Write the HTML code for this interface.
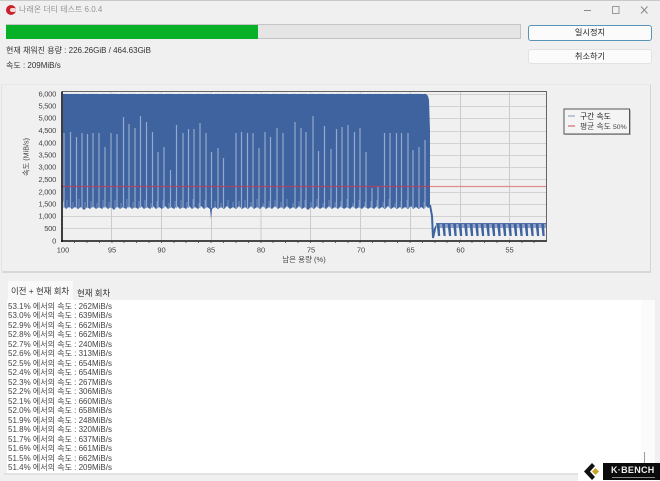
<!DOCTYPE html>
<html lang="ko"><head><meta charset="utf-8"><title>나래온 더티 테스트</title>
<style>
html,body{margin:0;padding:0}
body{width:660px;height:481px;overflow:hidden;background:#f0f0f0;position:relative;font-family:"Liberation Sans","Noto Sans CJK KR",sans-serif;color:#333}
#wrap{position:absolute;inset:0;filter:blur(.3px)}
.a{position:absolute;white-space:nowrap}
.btn{position:absolute;left:528px;width:124px;box-sizing:border-box;background:#fbfbfb;border-radius:3px;text-align:center;font-size:8.2px;color:#222}
#log{position:absolute;left:8px;top:301.500px;font-size:8px;line-height:9.500px;color:#444;white-space:pre}
</style></head><body><div id="wrap">
<div class="a" style="left:0;top:0;width:660px;height:1px;background:#c9c9c9"></div>
<div class="a" style="left:6px;top:5px;width:10px;height:10px;border-radius:50%;background:#c8232c"></div>
<div class="a" style="left:10px;top:8px;width:6px;height:4px;border-radius:2px;background:#f3d9d9"></div>
<div class="a" style="left:19px;top:4px;font-size:8px;line-height:12px;color:#959595">나래온 더티 테스트 6.0.4</div>
<svg class="a" style="left:580px;top:3px" width="76" height="14" fill="none" stroke="#8a8a8a" stroke-width="1"><path d="M4 7.500h7"/><rect x="32.500" y="3.500" width="6.500" height="7" stroke="#999"/><path d="M61 3.500l6.500 7M67.500 3.500l-6.500 7"/></svg>

<div class="a" style="left:6px;top:24px;width:515px;height:15px;box-sizing:border-box;background:#e5e5e5;border:1px solid #c4c4c4"></div>
<div class="a" style="left:6px;top:25px;width:252px;height:14px;background:#07b027"></div>
<div class="a" style="left:6px;top:45px;font-size:8px;line-height:12px;color:#333">현재 채워진 용량 : 226.26GiB / 464.63GiB</div>
<div class="a" style="left:6px;top:60px;font-size:8px;line-height:12px;color:#333">속도 : 209MiB/s</div>
<div class="btn" style="top:25px;height:16px;border:1px solid #5a93b8;line-height:14px">일시정지</div>
<div class="btn" style="top:49px;height:15px;border:1px solid #e2e2e2;line-height:13px">취소하기</div>

<div class="a" style="left:1px;top:84px;width:650px;height:187px;box-sizing:border-box;border-left:1px solid #e2e2e2;border-right:1px solid #d4d4d4;border-top:1px solid #e9e9e9"></div>
<div class="a" style="left:2px;top:271px;width:649px;height:2px;background:#d8d8d8"></div>

<svg class="a" style="left:0;top:80px" width="660" height="190" viewBox="0 80 660 190" font-family="Liberation Sans, Noto Sans CJK KR, sans-serif">
<defs>
<pattern id="saw" x="436" y="222" width="5.500" height="16" patternUnits="userSpaceOnUse">
<rect width="5.500" height="16" fill="#f0f0f0"/>
<path d="M0 1.500h5.500V6H0z" fill="#8fa4c8"/>
<path d="M0.500 1L2 14L4.200 14L3.500 1z" fill="#3f639f"/>
<path d="M0 1.500h5.500" stroke="#4f6fa6" stroke-width="1"/>
</pattern>
</defs>
<g stroke="#d2d2d2" stroke-width="1" fill="none">
<path d="M62 228.500H547M62 216.500H547M62 204.500H547M62 192.500H547M62 179.500H547M62 167.500H547M62 155.500H547M62 143.500H547M62 131.500H547M62 118.500H547M62 106.500H547M62 94.500H547"/>
<path d="M111.500 92V241M161.500 92V241M211.500 92V241M261 92V241M310.500 92V241M360.500 92V241M410.500 92V241M460.500 92V241M509.500 92V241" stroke="#cbcbcb"/>
</g>
<path fill="#3f639f" d="M63 94L426 94L428 96L429 100L430 130L430 207L428 208L426 206L424 209L421 207L419 209L416 207L413 209L411 206L408 209L405 207L402 209L400 207L397 209L394 207L391 209L388 206L385 209L382 207L379 209L377 206L374 209L371 207L368 209L365 206L362 209L359 207L356 209L353 206L350 209L347 207L344 209L341 206L338 209L335 207L332 209L329 206L326 209L323 207L320 209L317 206L314 209L311 207L308 210L305 207L302 209L299 206L296 209L293 207L290 209L287 206L284 209L281 207L278 209L275 206L272 209L269 207L266 209L263 206L260 209L257 207L254 209L251 206L248 209L245 207L242 209L239 206L236 209L233 207L230 209L227 206L224 209L221 207L218 209L215 207L212 209L211 219L210 209L207 207L204 209L201 206L198 209L195 207L192 209L189 206L186 209L183 207L180 209L177 206L174 209L171 207L168 209L165 206L162 209L159 207L156 209L153 206L150 209L147 207L144 209L141 206L138 209L135 207L132 209L129 206L126 209L123 207L120 209L117 206L114 210L111 207L108 209L105 206L102 209L99 207L96 209L93 206L90 209L87 207L84 210L81 207L78 209L75 207L72 209L69 207L66 209L64 206L63 200Z"/>
<path fill="none" stroke="#dfe4ec" stroke-width="1" stroke-dasharray="5 2 9 3" d="M63 93.500H426"/>
<g fill="none" stroke="#94a9cd" stroke-width="1.200">
<path d="M64 133V208M70.500 132V208M76.500 137V208M82 133V208M87.500 134V208M93 133V208M99 133V208M105 147V208M111 133V208M117 134V208M123.500 117V208M129 124V208M135 128V208M140.500 116V208M146.500 122V208M152.500 132V208M158 152V208M164 147V208M170.500 170V208M176.500 125V208M183 133V208M188.500 129V208M194 129V208M200 123V208M206 133V208M211.500 152V208M218 148V208M223.500 158V208M236 133V208M241.500 132V208M247.500 133V208M253 133V208M259 148V208M265 132V208M270.500 137V208M277 128V208M283 133V208M295 122V208M301 128V208M306 132V208M313 116V208M318.500 151V208M324.500 126V208M331 149V208M336.500 129V208M342 127V208M348 125V208M354.500 132V208M360 128V208M366 152V208M372 188V208M378 186V208M384.500 133V208M390 133V208M396.500 133V208M401.500 133V208M408 133V208M413 150V208M419 147V208M425 140V208"/>
</g>
<g fill="none" stroke="#9db1d3" stroke-width="1" opacity=".55">
<path d="M67 200V208M73 202V208M79 199V208M85 202V208M91 201V208M97 203V208M103 200V208M109 202V208M115 200V208M121 203V208M127 199V208M133 202V208M139 201V208M145 200V208M151 203V208M157 201V208M163 200V208M169 203V208M175 201V208M181 200V208M187 202V208M193 199V208M199 203V208M205 200V208M215 201V208M221 203V208M228 200V208M233 202V208M239 201V208M245 200V208M251 202V208M257 199V208M263 203V208M269 201V208M275 200V208M281 202V208M287 199V208M293 203V208M299 201V208M305 200V208M311 202V208M317 199V208M323 203V208M329 200V208M335 202V208M341 201V208M347 199V208M353 203V208M359 200V208M365 202V208M371 201V208M377 200V208M383 202V208M389 199V208M395 203V208M401 201V208M407 200V208M413 202V208M419 199V208M424 202V208"/>
</g>
<path d="M430 205L432 216L433 238L435 229L437 225" fill="none" stroke="#3f639f" stroke-width="2"/>
<rect x="436" y="222" width="111" height="16" fill="url(#saw)"/>
<path d="M62 186.500H430" stroke="#b4425f" stroke-width="1.200" opacity=".85"/>
<path d="M430 186.500H547" stroke="#db8d8f" stroke-width="1.200"/>
<path d="M62 91.500H546.500V240" fill="none" stroke="#666" stroke-width="1"/>
<path d="M62 91.500V242M61 241H547" fill="none" stroke="#111" stroke-width="1.600"/>
<path stroke="#444" stroke-width=".8" d="M74.500 241V243M87 241V243M99.500 241V243M112 241V243M124 241V243M136.500 241V243M149 241V243M161.500 241V243M174 241V243M186 241V243M198.500 241V243M211 241V243M223.500 241V243M236 241V243M248.500 241V243M261 241V243M273 241V243M285.500 241V243M298 241V243M310.500 241V243M323 241V243M335.500 241V243M348 241V243M360 241V243M372.500 241V243M385 241V243M397.500 241V243M410 241V243M422.500 241V243M435 241V243M447 241V243M459.500 241V243M472 241V243M484.500 241V243M497 241V243M509.500 241V243M522 241V243M534 241V243"/>
<g font-size="7.500" fill="#444" text-anchor="end" letter-spacing="-.25">
<text x="56" y="96.500">6,000</text><text x="56" y="108.500">5,500</text><text x="56" y="120.500">5,000</text><text x="56" y="133">4,500</text><text x="56" y="145.500">4,000</text><text x="56" y="157.500">3,500</text><text x="56" y="169.500">3,000</text><text x="56" y="182">2,500</text><text x="56" y="194.500">2,000</text><text x="56" y="206.500">1,500</text><text x="56" y="218.500">1,000</text><text x="56" y="231">500</text><text x="56" y="243.500">0</text>
</g>
<g font-size="7.500" fill="#444" text-anchor="middle">
<text x="63" y="252.500">100</text><text x="112" y="252.500">95</text><text x="161.500" y="252.500">90</text><text x="211" y="252.500">85</text><text x="261" y="252.500">80</text><text x="311" y="252.500">75</text><text x="361" y="252.500">70</text><text x="410.500" y="252.500">65</text><text x="460.500" y="252.500">60</text><text x="509.500" y="252.500">55</text>
<text x="304" y="262" font-size="7.500">남은 용량 (%)</text>
<text transform="translate(28.500 157) rotate(-90)" font-size="7.200">속도 (MiB/s)</text>
</g>
<rect x="565" y="110" width="66" height="25" fill="#8a8a8a" opacity=".5"/>
<rect x="564" y="109" width="65.500" height="25" fill="#f4f4f4" stroke="#555" stroke-width="1"/>
<path d="M568 116H575" stroke="#9aa6bb" stroke-width="1.200"/><path d="M568 126H575" stroke="#d06a72" stroke-width="1.200"/>
<text x="580" y="119" font-size="7.800" fill="#222">구간 속도</text>
<text x="580" y="129" font-size="7.800" fill="#444">평균 속도 <tspan font-size="6.800">50%</tspan></text>
</svg>

<div class="a" style="left:8px;top:281px;width:65px;height:20px;background:#f9f9f9"></div>
<div class="a" style="left:11px;top:286px;font-size:8.400px;line-height:11px;color:#333">이전 + 현재 회차</div>
<div class="a" style="left:77px;top:288px;font-size:8.400px;line-height:11px;color:#333">현재 회차</div>
<div class="a" style="left:7px;top:300px;width:634px;height:173px;background:#fff"></div>
<div class="a" style="left:641px;top:300px;width:14px;height:173px;background:#fbfbfb"></div>
<div class="a" style="left:644px;top:452px;width:1px;height:21px;background:#9c9c9c"></div>
<div class="a" style="left:4px;top:473px;width:574px;height:2px;background:#e2e2e2"></div>
<div id="log">53.1% 에서의 속도 : 262MiB/s
53.0% 에서의 속도 : 639MiB/s
52.9% 에서의 속도 : 662MiB/s
52.8% 에서의 속도 : 662MiB/s
52.7% 에서의 속도 : 240MiB/s
52.6% 에서의 속도 : 313MiB/s
52.5% 에서의 속도 : 654MiB/s
52.4% 에서의 속도 : 654MiB/s
52.3% 에서의 속도 : 267MiB/s
52.2% 에서의 속도 : 306MiB/s
52.1% 에서의 속도 : 660MiB/s
52.0% 에서의 속도 : 658MiB/s
51.9% 에서의 속도 : 248MiB/s
51.8% 에서의 속도 : 320MiB/s
51.7% 에서의 속도 : 637MiB/s
51.6% 에서의 속도 : 661MiB/s
51.5% 에서의 속도 : 662MiB/s
51.4% 에서의 속도 : 209MiB/s</div>

<div class="a" style="left:578px;top:463px;width:82px;height:18px;background:#fff"></div>
<svg class="a" style="left:582px;top:462px" width="20" height="19"><path d="M10 1L2 9.500L10 18L13 15L8 9.500L13 4Z" fill="#111"/><path d="M13.500 6L17 9.500L13.500 13L10 9.500Z" fill="#c9a227"/></svg>
<div class="a" style="left:603px;top:463px;width:57px;height:17px;background:#0b0b0b"></div>
<div class="a" style="left:611px;top:465px;font-size:9px;line-height:11px;font-weight:bold;color:#eee;letter-spacing:.3px">K·BENCH</div>
<div class="a" style="left:612px;top:476.500px;width:43px;height:1.500px;background:#8a8a8a"></div>
</div></body></html>
